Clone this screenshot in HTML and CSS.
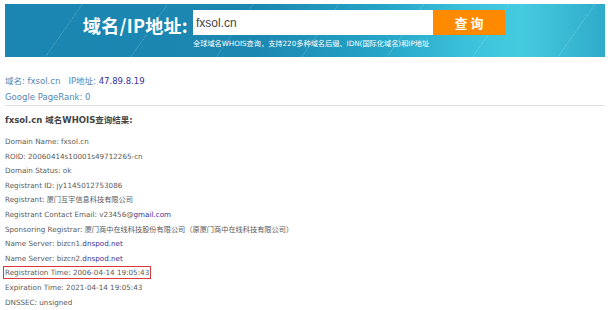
FILE: index.html
```html
<!DOCTYPE html>
<html>
<head>
    <title>域名WHOIS查询</title>
    <link rel="stylesheet" href="styles.css">
</head>
<body>
    <div class="banner">
        <div class="search-label">域名/IP地址:</div>
        <div class="search-box">
            <div class="search-row">
                <input class="search-input" type="text" value="fxsol.cn">
                <button class="search-btn">查 询</button>
            </div>
            <div class="search-tip">全球域名WHOIS查询，支持220多种域名后缀、IDN(国际化域名)和IP地址</div>
        </div>
    </div>

    <div class="summary">
        <div>域名: fxsol.cn &nbsp; IP地址: <span class="ip">47.89.8.19</span></div>
        <div>Google PageRank: 0</div>
    </div>

    <h3 class="result-title">fxsol.cn 域名WHOIS查询结果:</h3>

    <!-- whois raw lines -->
    <ul class="whois">
        <li>Domain Name: fxsol.cn</li>
        <li>ROID: 20060414s10001s49712265-cn</li>
        <li>Domain Status: ok</li>
        <li>Registrant ID: jy1145012753086</li>
        <li>Registrant: 厦门互宇信息科技有限公司</li>
        <li>Registrant Contact Email: v23456@<a href="#">gmail.com</a></li>
        <li>Sponsoring Registrar: 厦门商中在线科技股份有限公司（原厦门商中在线科技有限公司）</li>
        <li>Name Server: bizcn1.<a href="#">dnspod.net</a></li>
        <li>Name Server: bizcn2.<a href="#">dnspod.net</a></li>
        <li><span class="mark">Registration Time: 2006-04-14 19:05:43</span></li>
        <li>Expiration Time: 2021-04-14 19:05:43</li>
        <li>DNSSEC: unsigned</li>
    </ul>
</body>
</html>
```

FILE: styles.css
```css
body {
    margin: 0;
    padding: 0 5px;
    font-family: "DejaVu Sans", Verdana, "Noto Sans CJK SC", sans-serif;
    background-color: #fff;
    color: #555;
}
.banner {
    margin-top: 4px;
    height: 53px;
    display: flex;
    background:
        repeating-linear-gradient(-55deg, rgba(255,255,255,0) 0 38px, rgba(255,255,255,0.12) 38px 39px, rgba(255,255,255,0) 39px 70px),
        linear-gradient(90deg, #1b86b1 0%, #1c88b2 42%, #25a3c6 62%, #3cc3dc 78%, #45cbe0 86%, #2fabca 100%);
}
.search-label {
    width: 183px;
    text-align: right;
    padding-top: 8px;
    font-size: 18px;
    font-weight: bold;
    color: #fff;
    font-family: "Noto Sans CJK SC", "DejaVu Sans", sans-serif;
    letter-spacing: 0.3px;
}
.search-box {
    margin-left: 5px;
    padding-top: 6px;
}
.search-row {
    display: flex;
}
.search-input {
    width: 240px;
    height: 25px;
    box-sizing: border-box;
    border: none;
    padding: 0 3px;
    font-family: "Liberation Sans", Arial, sans-serif;
    font-size: 12px;
    color: #444;
    outline: none;
}
.search-btn {
    width: 72px;
    height: 25px;
    border: none;
    background-color: #ff8a00;
    color: #fff;
    font-family: "Noto Sans CJK SC", sans-serif;
    font-size: 13px;
    font-weight: bold;
    cursor: pointer;
}
.search-tip {
    margin-top: 3px;
    font-size: 7.2px;
    color: #fff;
    font-family: "DejaVu Sans", "Noto Sans CJK SC", sans-serif;
}
.summary {
    margin-top: 16px;
    padding-bottom: 0;
    border-bottom: 1px solid #e2e2e2;
    font-size: 8.5px;
    line-height: 16px;
    color: #5287b4;
}
.ip {
    color: #33339a;
}
.result-title {
    margin: 8px 0 9px;
    font-size: 8.5px;
    line-height: 12px;
    color: #444;
}
.whois {
    list-style: none;
    margin: 0;
    padding: 0;
    font-size: 7.2px;
    color: #5a5a5a;
}
.whois li {
    height: 14.6px;
    line-height: 14.6px;
}
.whois a {
    color: #333399;
    text-decoration: none;
}
.mark {
    margin-left: -2px;
    padding: 1px 1px;
    border: 1px solid #d9393c;
}
```
